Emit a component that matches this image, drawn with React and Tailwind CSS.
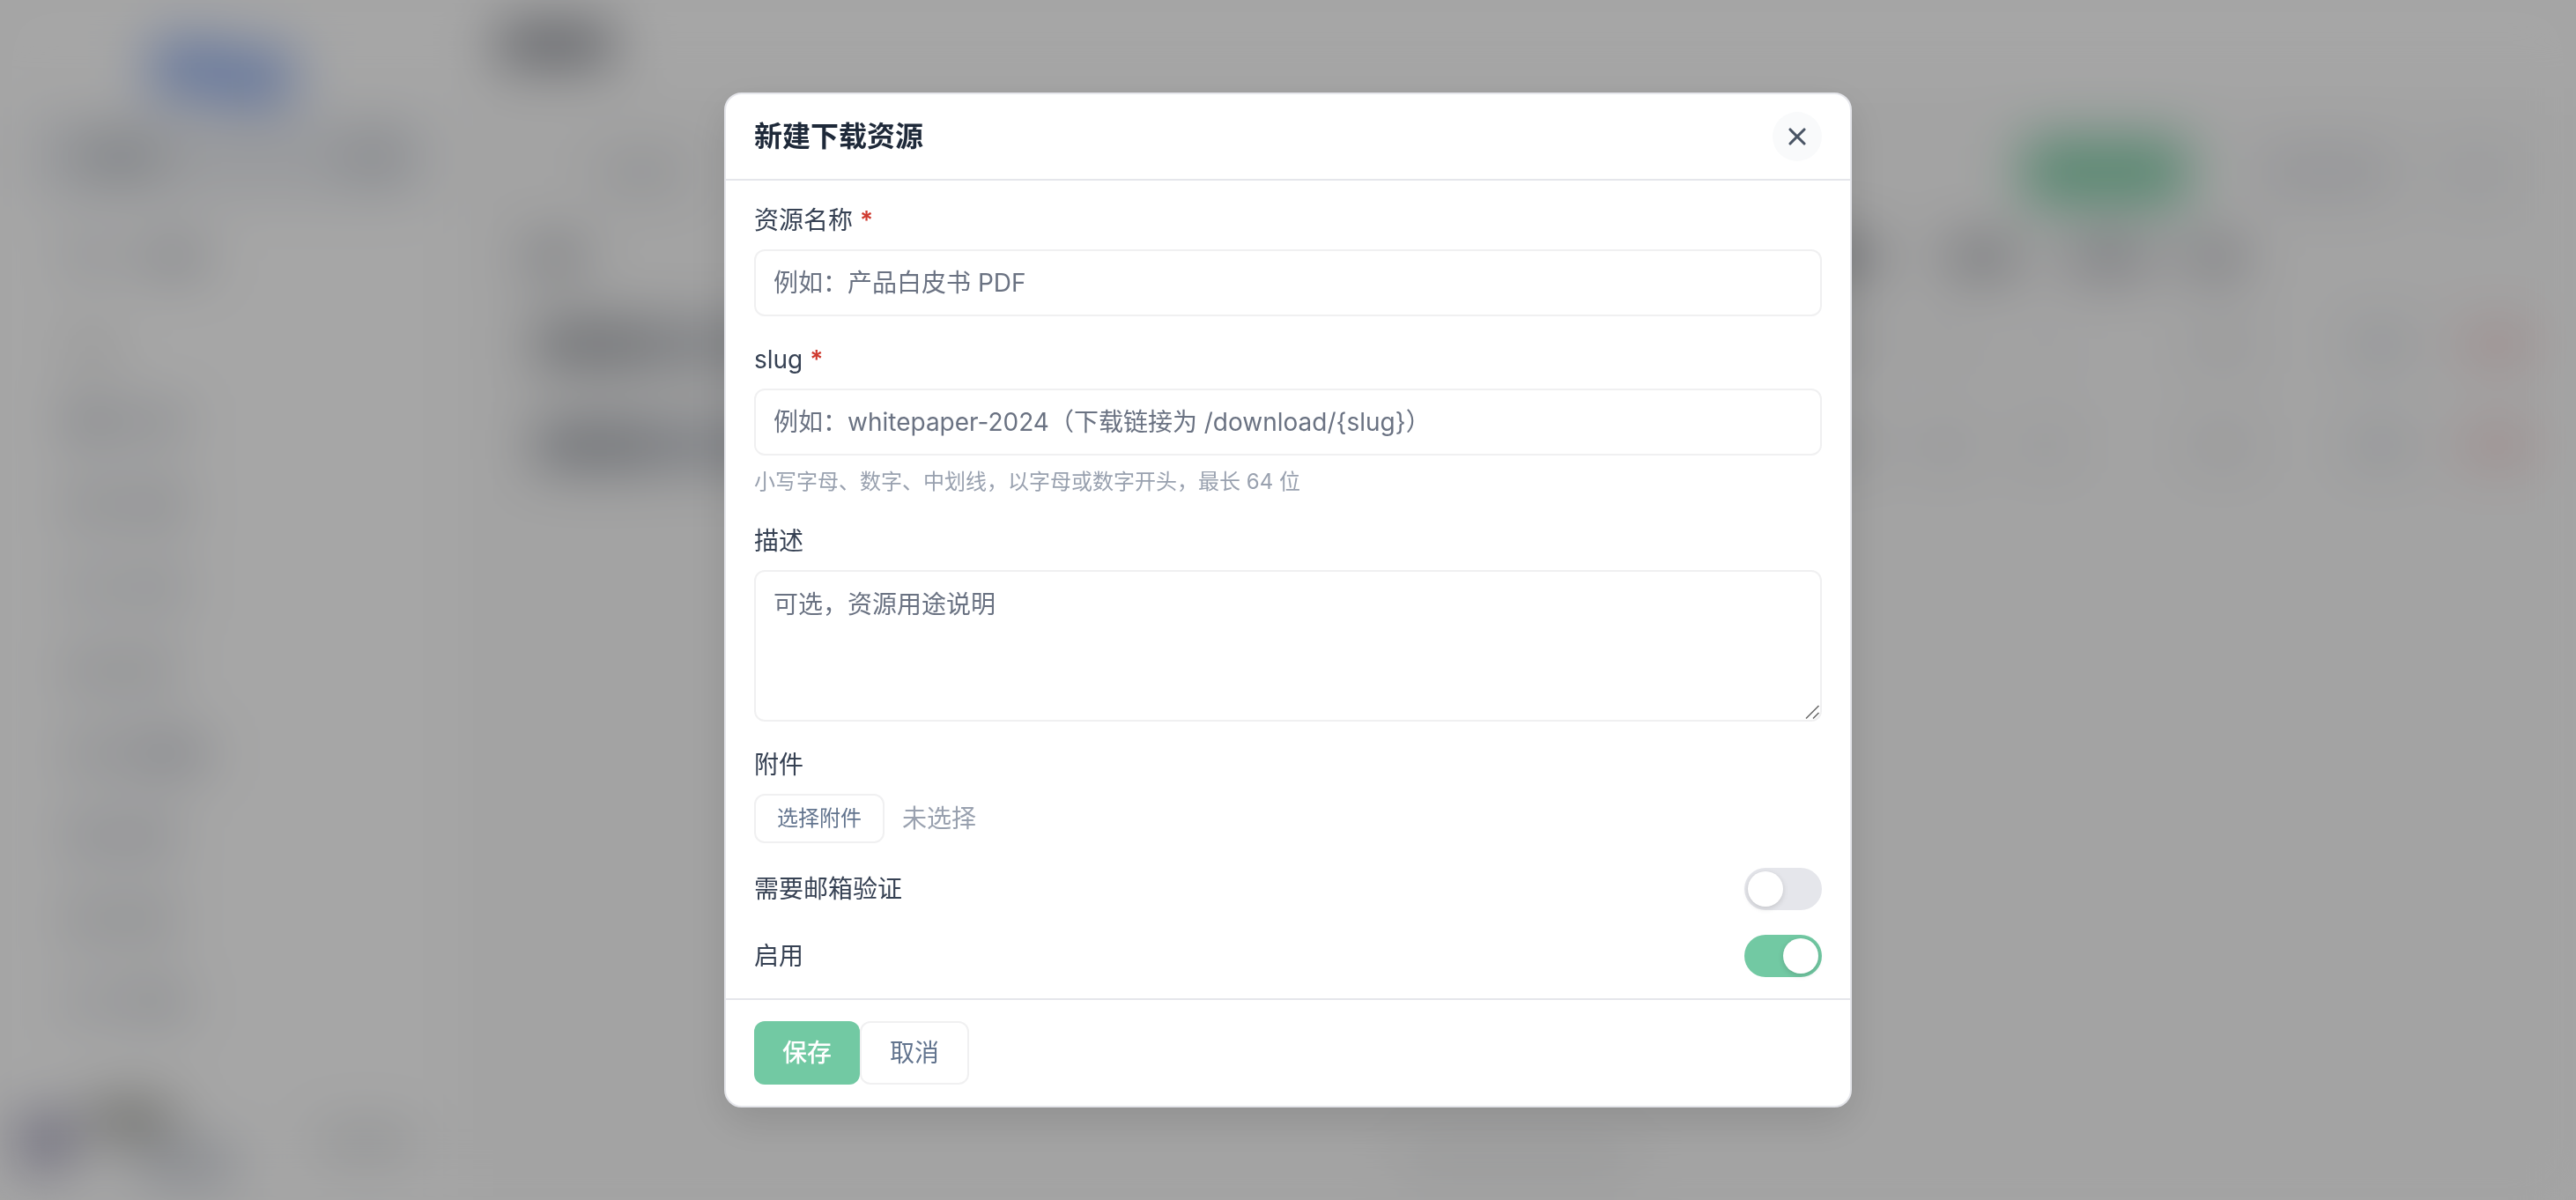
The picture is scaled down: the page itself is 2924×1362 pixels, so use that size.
import { useRef, useState } from 'react';
import { X } from 'lucide-react';

const NAV_ITEMS = [
    { id: 'dashboard', icon: 'w-12 bg-[#acb0ba]', text: 'w-18 bg-[#cdd0d6]' },
    { id: 'articles', icon: 'w-12 bg-[#c4c7cd]', text: 'w-18 bg-[#c8cbd1]' },
    { id: 'pages', icon: 'w-12 bg-[#d3d6dc]', text: 'w-18 bg-[#d3d6dc]' },
    { id: 'media', icon: 'w-12 bg-[#c6c9cf]', text: 'w-14 bg-[#c8cbd1]' },
    { id: 'downloads', icon: 'w-12 bg-[#c8cbd1]', text: 'w-24 bg-[#bec1ca]' },
    { id: 'forms', icon: 'w-12 bg-[#c2c5ce]', text: 'w-14 bg-[#c2c5ce]' },
    { id: 'users', icon: 'w-12 bg-[#c6c9cf]', text: 'w-14 bg-[#c6c9cf]' },
    { id: 'settings', icon: 'w-12 bg-[#d6d8de]', text: 'w-18 bg-[#cbced4]' }
];

const ROWS = [
    { id: 1, name: 'bg-[#a0a3a9]', path: 'bg-[#b9bcc2]', views: 'bg-[#ececee]', count: 'bg-[#f4f4f6]', state: 'bg-[#e2e3e6]' },
    { id: 2, name: 'bg-[#a0a4ac]', path: 'bg-[#b7bbc3]', views: 'bg-[#e2e3e7]', count: 'bg-[#e6e7ea]', state: 'bg-[#e2e3e6]' }
];

const inputClass = 'block w-full rounded-xl border-2 border-[#f0f0f1] bg-white px-5 text-[28px] leading-[42px] text-gray-800 placeholder:text-gray-500 outline-none focus:border-[#72c9a3]';
const labelClass = 'text-[28px] leading-[42px] text-gray-700';

const Bar = ({ className }) => <div className={`h-8 shrink-0 rounded-lg ${className}`} />;

const Sidebar = () => (
    <aside className="flex w-[520px] shrink-0 flex-col bg-white">
        <div className="flex h-[130px] items-center pt-8 pl-[172px]">
            <div className="mb-2 h-16 w-20 bg-[#98b4f0]" />
            <div className="mt-3 h-16 w-20 bg-[#98b4f0]" />
        </div>
        <div className="mx-8 flex h-24 items-center justify-between rounded-xl bg-[#eceef2] pr-8 pl-14">
            <Bar className="w-24 bg-[#b4b9bf]" />
            <Bar className="w-16 bg-[#c4c8ce]" />
        </div>
        <div className="mt-4 flex h-[100px] items-center gap-8 pl-[76px]">
            <Bar className="w-12 bg-[#d0d3d9]" />
            <Bar className="w-20 bg-[#c4c7ce]" />
        </div>
        <div className="flex h-[90px] items-center pt-5 pl-[76px]">
            <Bar className="w-14 bg-[#dcdcdc]" />
        </div>
        <nav className="flex flex-col">
            {NAV_ITEMS.map((item) => (
                <div key={item.id} className="flex h-[94px] items-center gap-4 pl-[76px]">
                    <Bar className={item.icon} />
                    <Bar className={item.text} />
                </div>
            ))}
        </nav>
        <div className="mt-auto mb-6 flex items-center gap-4 pl-5">
            <div className="h-16 w-16 rounded-full bg-[#9390ae]" />
            <div className="flex w-[220px] flex-col gap-5">
                <Bar className="w-24 bg-[#868680]" />
                <Bar className="ml-14 w-28 bg-[#bac0cc]" />
            </div>
            <Bar className="ml-6 w-28 bg-[#dadcde]" />
        </div>
    </aside>
);

const ResourceTable = () => (
    <div className="-mt-10 flex flex-col">
        <div className="flex h-[84px] items-center justify-between pl-[78px]">
            <Bar className="w-16 bg-[#acafb6]" />
            <div className="flex w-[874px]">
                <Bar className="w-20 bg-[#868991]" />
                <Bar className="ml-20 w-20 bg-[#9c9fa6]" />
                <Bar className="ml-14 w-24 bg-[#a8abb3]" />
                <Bar className="ml-10 w-16 bg-[#a4a7af]" />
            </div>
        </div>
        {ROWS.map((row) => (
            <div key={row.id} className="flex h-[114px] items-center justify-between pl-[88px]">
                <div className="flex items-center">
                    <div className={`h-12 w-32 ${row.name}`} />
                    <div className={`h-12 w-60 ${row.path}`} />
                </div>
                <div className="flex w-[854px] items-center">
                    <Bar className="w-12 bg-[#c8cacf]" />
                    <Bar className={`ml-[60px] w-14 ${row.views}`} />
                    <Bar className={`ml-[60px] w-14 ${row.count}`} />
                    <Bar className={`ml-[140px] w-16 ${row.state}`} />
                    <Bar className="ml-[120px] w-14 bg-[#d4d8df]" />
                    <Bar className="ml-16 w-20 bg-[#f2cccc]" />
                </div>
            </div>
        ))}
    </div>
);

// Dimmed page that stays behind the dialog
const AdminPage = () => (
    <div aria-hidden="true" className="flex min-h-screen bg-[#fafafa] blur-[32px]">
        <Sidebar />
        <main className="flex flex-1 flex-col">
            <header className="flex h-[100px] items-center bg-white pl-[44px]">
                <div className="h-10 w-[132px] rounded-lg bg-[#7c7f88]" />
            </header>
            <div className="flex h-[190px] items-center pr-[72px] pl-[160px]">
                <Bar className="w-24 bg-[#d8dade]" />
                <div className="ml-auto flex items-center">
                    <div className="h-[76px] w-[188px] rounded-xl bg-[#86d0ac]" />
                    <div className="ml-20 h-14 w-[152px] rounded-xl bg-[#e6e7eb]" />
                    <div className="ml-14 h-14 w-20 rounded-xl bg-[#eeeff1]" />
                </div>
            </div>
            <ResourceTable />
            <footer className="mt-auto flex justify-center pt-6 pb-7">
                <Bar className="w-[260px] bg-[#e8e9ea]" />
            </footer>
        </main>
    </div>
);

const Field = ({ id, label, required, hint, children }) => (
    <div className="flex flex-col gap-3">
        <label htmlFor={id} className={labelClass}>
            {label}
            {required && <span className="ml-2 font-semibold text-[#cf3a2f]">*</span>}
        </label>
        {children}
        {hint && <p className="text-2xl leading-9 text-gray-400">{hint}</p>}
    </div>
);

const ToggleRow = ({ id, label, checked, onChange }) => (
    <div className="flex items-center justify-between">
        <label htmlFor={id} className={labelClass}>{label}</label>
        <input
            id={id}
            type="checkbox"
            role="switch"
            checked={checked}
            onChange={(e) => onChange(e.target.checked)}
            className="h-12 w-[88px] cursor-pointer appearance-none rounded-full bg-[#e5e6eb] p-1 transition-colors before:block before:h-10 before:w-10 before:rounded-full before:bg-white before:shadow-[0_2px_6px_rgba(0,0,0,0.15)] checked:bg-[#72c9a3] checked:before:ml-auto"
        />
    </div>
);

const ResourceDialog = () => {
    const [needEmail, setNeedEmail] = useState(false);
    const [enabled, setEnabled] = useState(true);
    const [fileName, setFileName] = useState('');
    const fileRef = useRef(null);

    return (
        <form
            role="dialog"
            aria-modal="true"
            aria-labelledby="dialog-title"
            onSubmit={(e) => e.preventDefault()}
            className="w-full max-w-[1280px] rounded-[20px] border-2 border-[#e5e6eb] bg-white shadow-[0_16px_48px_rgba(0,0,0,0.12)]"
        >
            {/* Header */}
            <div className="flex items-center justify-between border-b-2 border-[#e5e6eb] px-8 py-5">
                <h2 id="dialog-title" className="text-[32px] leading-12 font-semibold text-gray-800">新建下载资源</h2>
                <button type="button" aria-label="关闭" className="flex h-14 w-14 items-center justify-center rounded-full bg-gray-50 text-gray-600">
                    <X className="h-8 w-8" strokeWidth={2.3} />
                </button>
            </div>

            {/* Fields */}
            <div className="flex flex-col gap-7 px-8 py-6">
                <Field id="name" label="资源名称" required>
                    <input id="name" type="text" placeholder="例如：产品白皮书 PDF" className={`h-19 ${inputClass}`} />
                </Field>
                <Field id="slug" label="slug" required hint="小写字母、数字、中划线，以字母或数字开头，最长 64 位">
                    <input id="slug" type="text" placeholder="例如：whitepaper-2024（下载链接为 /download/{slug}）" className={`h-19 ${inputClass}`} />
                </Field>
                <Field id="desc" label="描述">
                    <div className="relative">
                        <textarea id="desc" placeholder="可选，资源用途说明" className={`h-43 resize-none py-4 ${inputClass}`} />
                        <svg viewBox="0 0 20 20" className="pointer-events-none absolute right-0 bottom-0 h-5 w-5" stroke="#666" strokeWidth="1.5" fill="none">
                            <path d="M2 16.5 16.5 2M10 16.5l6.5-6.5" />
                        </svg>
                    </div>
                </Field>
                <Field id="file" label="附件">
                    <div className="flex items-center gap-5">
                        <button
                            type="button"
                            onClick={() => fileRef.current.click()}
                            className="h-14 rounded-xl border-2 border-[#f0f0f1] bg-white px-6 text-2xl text-slate-500"
                        >
                            选择附件
                        </button>
                        <input ref={fileRef} id="file" type="file" className="hidden" onChange={(e) => setFileName(e.target.files[0]?.name ?? '')} />
                        <span className="text-[28px] leading-[42px] text-gray-400">{fileName || '未选择'}</span>
                    </div>
                </Field>
                <ToggleRow id="need-email" label="需要邮箱验证" checked={needEmail} onChange={setNeedEmail} />
                <ToggleRow id="enabled" label="启用" checked={enabled} onChange={setEnabled} />
            </div>

            {/* Footer */}
            <div className="flex border-t-2 border-[#e5e6eb] px-8 py-6">
                <button type="submit" className="h-18 rounded-xl bg-[#72c9a3] px-8 text-[28px] font-medium text-white">保存</button>
                <button type="button" className="h-18 rounded-xl border-2 border-[#f0f0f1] bg-white px-8 text-[28px] text-slate-500">取消</button>
            </div>
        </form>
    );
};

export default function App() {
    return (
        <div className="overflow-hidden bg-[#fdfdfd] font-['Inter','Noto_Sans_CJK_SC',sans-serif]">
            <AdminPage />
            <div className="fixed inset-0 flex items-center justify-center overflow-y-auto bg-black/35 p-8">
                <ResourceDialog />
            </div>
        </div>
    );
}
